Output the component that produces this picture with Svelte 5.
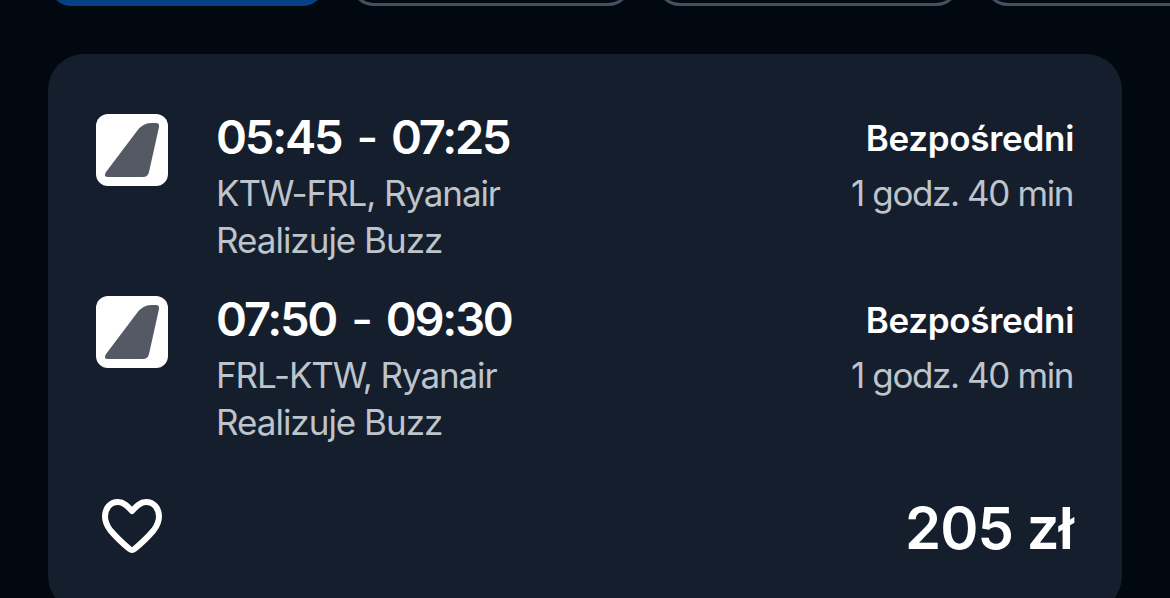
<script lang="ts">
  interface Leg {
    readonly depart: string;
    readonly arrive: string;
    readonly route: string;
    readonly operator: string;
    readonly stops: string;
    readonly duration: string;
  }

  const legs: Leg[] = [
    {
      depart: '05:45',
      arrive: '07:25',
      route: 'KTW-FRL, Ryanair',
      operator: 'Realizuje Buzz',
      stops: 'Bezpośredni',
      duration: '1 godz. 40 min',
    },
    {
      depart: '07:50',
      arrive: '09:30',
      route: 'FRL-KTW, Ryanair',
      operator: 'Realizuje Buzz',
      stops: 'Bezpośredni',
      duration: '1 godz. 40 min',
    },
  ];

  const chipWidths = [278, 282, 304, 300];

  let selected = $state(0);
  let saved = $state(false);
</script>

<main>
  <nav class="chips">
    {#each chipWidths as w, i}
      <button
        class="chip"
        class:active={selected === i}
        style="width: {w}px"
        aria-label="Filtr {i + 1}"
        onclick={() => selected = i}
      ></button>
    {/each}
  </nav>

  <article class="card">
    {#each legs as leg}
      <section class="leg">
        <div class="logo">
          <svg viewBox="0 0 72 72" aria-hidden="true">
            <path d="M10 58 L41 17 Q47 9 55 9 L60 9 Q63.5 9 63 13 L53 58 Q52 63 47 63 L12 63 Q7 63 10 58 Z" />
          </svg>
        </div>
        <div class="info">
          <div class="times">
            <span>{leg.depart}</span><span class="dash">-</span><span>{leg.arrive}</span>
          </div>
          <div class="sub route">{leg.route}</div>
          <div class="sub operator">{leg.operator}</div>
        </div>
        <div class="summary">
          <div class="stops">{leg.stops}</div>
          <div class="sub duration">{leg.duration}</div>
        </div>
      </section>
    {/each}

    <footer>
      <button class="save" class:saved aria-label="Zapisz" onclick={() => saved = !saved}>
        <svg viewBox="0 0 72 72" aria-hidden="true">
          <path d="M36 23 C32 18.500 28 14 22 14 C14 14 9 20.500 9 28.500 C9 34 11 38 14.500 42.500 C20 49 27.500 56 33.500 61 Q36 63 38.500 61 C44.500 56 52 49 57.500 42.500 C61 38 63 34 63 28.500 C63 20.500 58 14 50 14 C44 14 40 18.500 36 23 Z" />
        </svg>
      </button>
      <div class="price">205 zł</div>
    </footer>
  </article>
</main>

<style>
  :global(body) {
    margin: 0;
    overflow: hidden;
    background: #01080f;
  }

  main {
    height: 598px;
    overflow: hidden;
    box-sizing: border-box;
    padding: 0 48px;
    font-family: Inter, "Liberation Sans", sans-serif;
    color: #fff;
  }

  button {
    padding: 0;
    border: none;
    background: none;
    cursor: pointer;
  }

  .chips {
    display: flex;
    align-items: flex-end;
    gap: 24px;
    height: 6px;
    margin-right: -48px;
    margin-bottom: 48px;
  }

  .chip {
    flex: none;
    height: 96px;
    box-sizing: border-box;
    border: 3px solid #444f5f;
    border-radius: 24px;
  }

  .chip.active {
    border-color: #054184;
    background: #054184;
  }

  .card {
    height: 558px;
    box-sizing: border-box;
    padding: 60px 48px 0;
    border-radius: 36px;
    background: #151e2c;
  }

  .leg {
    display: flex;
    height: 182px;
  }

  .logo {
    width: 72px;
    height: 72px;
    border-radius: 12px;
    background: #fff;
  }

  .logo svg, .save svg {
    display: block;
    width: 72px;
    height: 72px;
  }

  .logo path {
    fill: #555963;
  }

  .info {
    flex: 1;
    margin-left: 48px;
    white-space: nowrap;
  }

  .times {
    display: flex;
    height: 56px;
    line-height: 46px;
    font-size: 47px;
    font-weight: 600;
    letter-spacing: -2.2px;
  }

  .dash {
    margin: 0 15px;
    font-weight: 500;
  }

  .sub {
    height: 47px;
    line-height: 46px;
    font-size: 35px;
    letter-spacing: -1px;
    color: #bdc4cb;
  }

  .route {
    letter-spacing: -1.1px;
  }

  .summary {
    text-align: right;
    white-space: nowrap;
  }

  .duration {
    margin-right: 1px;
    letter-spacing: -1.4px;
  }

  .stops {
    height: 56px;
    line-height: 48px;
    font-size: 35px;
    font-weight: 600;
    letter-spacing: -0.3px;
  }

  footer {
    display: flex;
    justify-content: space-between;
    padding-top: 10px;
  }

  .save {
    width: 72px;
    height: 72px;
  }

  .save path {
    fill: none;
    stroke: #fff;
    stroke-width: 6;
    stroke-linejoin: round;
  }

  .save.saved path {
    fill: #fff;
  }

  .price {
    margin-right: 1px;
    line-height: 80px;
    font-size: 58px;
    font-weight: 600;
    letter-spacing: -0.9px;
  }
</style>
